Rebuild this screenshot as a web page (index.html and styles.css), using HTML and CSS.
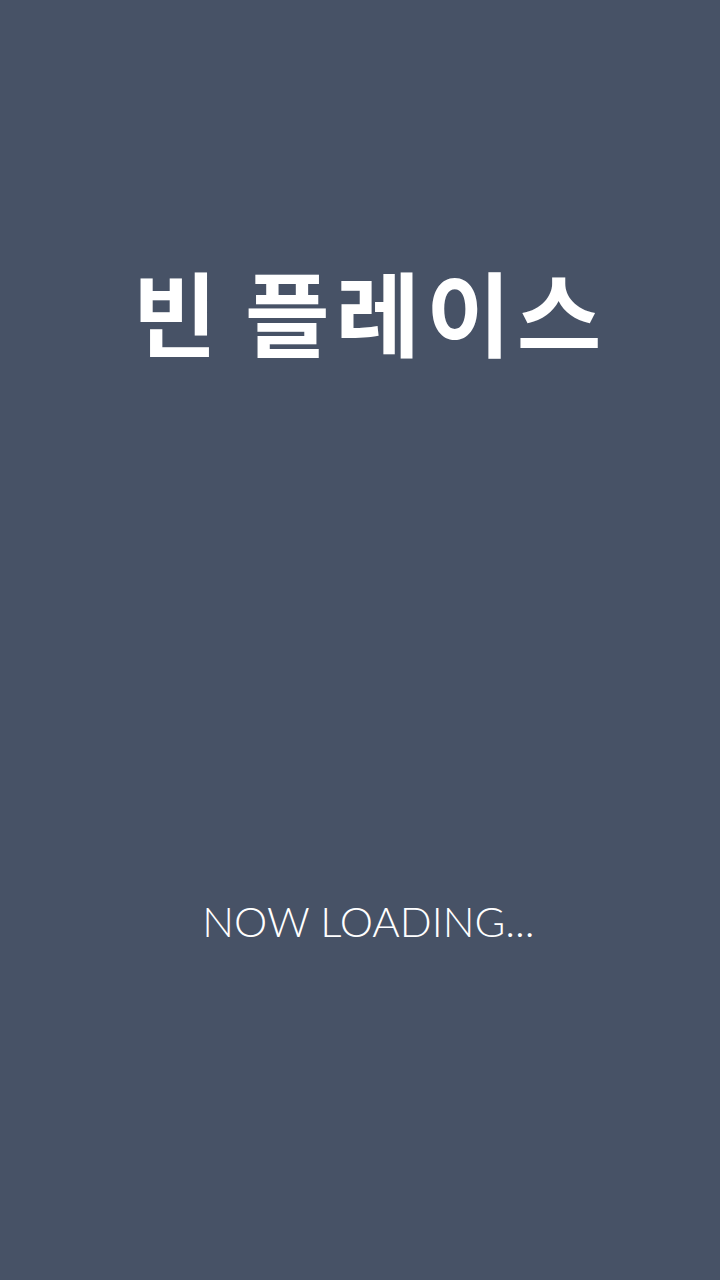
FILE: index.html
```html
<!DOCTYPE html>
<html lang="ko">
<head>
<meta charset="utf-8">
<link rel="stylesheet" href="styles.css">
</head>
<body>
<main class="splash">
  <h1 class="title">빈 플레이스</h1>
  <p class="loading">NOW LOADING...</p>
</main>
</body>
</html>
```
FILE: styles.css
```css
html, body {
  margin: 0;
  padding: 0;
  background: #475266;
}
.splash {
  width: 720px;
  height: 1280px;
  display: flex;
  flex-direction: column;
  align-items: center;
  color: #ffffff;
}
.title {
  margin: 0;
  padding-top: 241px;
  padding-left: 20px;
  font-family: "Noto Sans CJK KR", sans-serif;
  font-weight: 700;
  font-size: 92px;
  line-height: 138px;
  letter-spacing: 6px;
  word-spacing: -10px;
}
.loading {
  margin: 0;
  margin-top: 512px;
  padding-left: 17px;
  font-family: "Lato", sans-serif;
  font-weight: 300;
  font-size: 42px;
  line-height: 60px;
}
```
